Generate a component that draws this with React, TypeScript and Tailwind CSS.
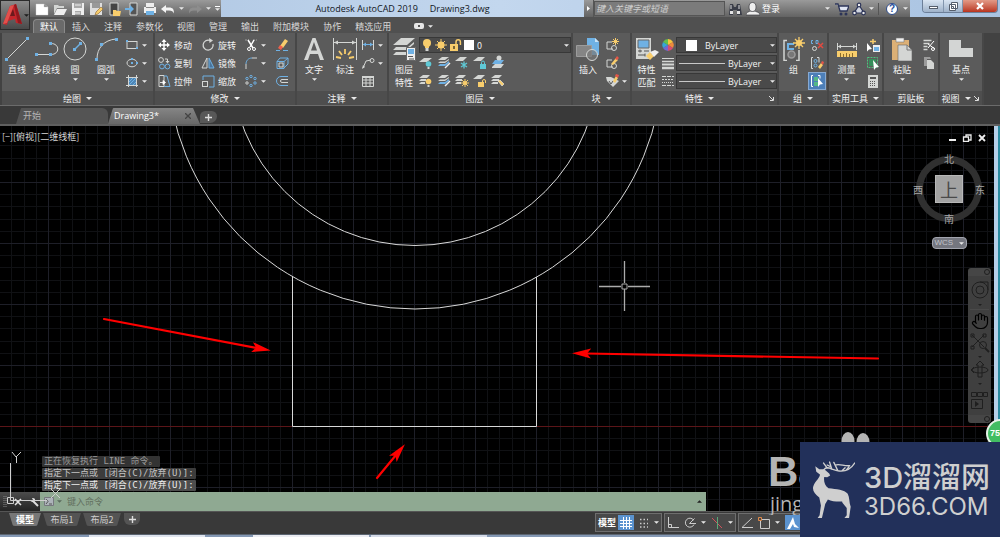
import type { ReactNode } from 'react';
import { Hand } from 'lucide-react';

/* ── Palette shared by the icons ─────────────────────────── */

const L = '#d4d6d4';
const B = '#6fb1e4';
const Y = '#f8cd6c';
const T = '#5fc9d6';
const G = '#9c9c9c';

/* ── Icon drawings ───────────────────────────────────────── */

const ICONS: Record<string, ReactNode> = {
  line: (
    <g>
      <path d="M2 22 22 2" stroke={L} />
      <path d="M0 21h3v3H0zM21 0h3v3h-3z" fill={B} />
    </g>
  ),
  polyline: (
    <g>
      <path d="M2 17.5h14c9 0 9-11 0-11" stroke={L} />
      <path d="M0 16h3v3H0zM14 16h3v3h-3zM14 5h3v3h-3z" fill={B} />
    </g>
  ),
  circle: (
    <g>
      <circle cx="12" cy="12" r="11" stroke={L} />
      <path d="m12 12 5-5" stroke={B} strokeWidth="1.4" />
      <path d="M10 11h3v3h-3zM16 5h3v3h-3z" fill={B} />
    </g>
  ),
  arc: (
    <g>
      <path d="M3 22C3 11 10 3 22 2" stroke={L} />
      <path d="M1 21h3v3H1zM6 6h3v3H6zM21 1h3v3h-3z" fill={B} />
    </g>
  ),
  rect: (
    <g>
      <rect x="2" y="3.5" width="10" height="7" stroke={L} />
      <path d="M1 2h2v2H1zM11 9h2v2h-2z" fill={B} />
    </g>
  ),
  ellipse: (
    <g>
      <ellipse cx="7" cy="7" rx="5" ry="3.8" stroke={L} />
      <path d="M6 6h2v2H6zM11 6h2v2h-2zM6 2h2v2H6z" fill={B} />
    </g>
  ),
  hatch: (
    <g>
      <path d="M1 3.5h12M1 11.5h12M3.5 1v12M11.5 1v12" stroke={L} />
      <path d="M4 4h7v7H4z" fill="#4f86b5" />
      <path d="m4 8 4-4M4 11l7-7M8 11l3-3" stroke={B} />
    </g>
  ),
  move: (
    <g>
      <path d="M7 2v10M2 7h10" stroke="#fff" strokeWidth="1.4" />
      <path d="m7 1 2.5 3h-5zM7 13l2.5-3h-5zM1 7l3-2.5v5zM13 7l-3-2.5v5z" fill="#fff" />
    </g>
  ),
  copy: (
    <g>
      <circle cx="4" cy="4" r="2.4" stroke={L} />
      <path d="M8 3h2.5v2" stroke={L} />
      <path d="m8.5 5 2 2.5 2-2.5z" fill={L} />
      <circle cx="5" cy="10.5" r="2.4" stroke={B} />
      <circle cx="10.5" cy="10.5" r="2.4" stroke={B} />
    </g>
  ),
  stretch: (
    <g>
      <path d="M2 1.5h5v11H2z" stroke={L} />
      <path d="M7 2h3l3 10.5H7" stroke={B} />
      <path d="M3 8.5h4M6 6.5l2.5 2-2.5 2z" stroke="#fff" fill="#fff" strokeWidth=".8" />
    </g>
  ),
  rotate: (
    <g>
      <path d="M9 2.5A5 5 0 1 0 12 6" stroke={L} strokeWidth="1.3" />
      <path d="m8 0 4 2.5L8.5 5z" fill={L} />
    </g>
  ),
  mirror: (
    <g>
      <path d="M6 2v10H1z" stroke={L} />
      <path d="M8 2v10h5z" stroke={B} fill="#4a7399" />
    </g>
  ),
  scale: (
    <g>
      <path d="M2 6V2h11v11H8" stroke={B} />
      <rect x="1.5" y="7.5" width="5" height="5" stroke={L} />
    </g>
  ),
  trim: (
    <g>
      <path d="M1 2h4M9 2h4" stroke={G} strokeDasharray="2 1" />
      <path d="m4 2 5 8M10 2 6 9" stroke="#fff" strokeWidth="1.5" />
      <circle cx="5" cy="11" r="1.5" stroke="#fff" />
      <circle cx="10" cy="11" r="1.5" stroke="#fff" />
    </g>
  ),
  fillet: (
    <g>
      <path d="M2 13V8" stroke={L} />
      <path d="M2 8c0-3 2-6 6-6" stroke={B} />
      <path d="M8 2h5" stroke={L} />
    </g>
  ),
  array: (
    <g stroke={B}>
      <circle cx="7" cy="2.5" r="1.2" />
      <circle cx="11" cy="4.5" r="1.2" />
      <circle cx="11" cy="9" r="1.2" />
      <circle cx="7" cy="11.5" r="1.2" />
      <circle cx="3" cy="9" r="1.2" stroke={L} />
      <circle cx="3" cy="4.5" r="1.2" />
    </g>
  ),
  erase: (
    <g>
      <path d="m5 8 5-7 3 2-5 7z" fill={Y} />
      <path d="m3 10 2-3 3 2-2 3z" fill="#f0604c" />
      <path d="M1 12.5h4M8 12.5h5" stroke={B} />
    </g>
  ),
  explode: (
    <g>
      <path d="M2 5.5h7v7H2zM2 5.5 5 2h8v6l-4 4M9 5.5 13 2" stroke={B} />
      <path d="M4 7h4v4H4z" stroke={L} />
    </g>
  ),
  offset: (
    <g>
      <path d="M13 2.5H6a4.5 4.5 0 0 0 0 9h7" stroke={B} />
      <path d="M13 5.5H7a1.5 1.5 0 0 0 0 3h6" stroke={L} />
    </g>
  ),
  text: <path d="M2 23 10.5 1h3L22 23h-4l-2-6H8l-2 6zM9 13.5h6L12 5z" fill={L} fillRule="evenodd" />,
  dimension: (
    <g>
      <path d="M.5 1v22M23.5 1v22M1 5.5h22" stroke={L} />
      <path d="m1 5.5 4-2v4zM23 5.5l-4-2v4z" fill={L} />
      <path d="M12 12v5M6 14l3 4M18 14l-3 4M3 20l5 1M21 20l-5 1" stroke={Y} strokeWidth="1.8" />
    </g>
  ),
  linear: (
    <g>
      <path d="M1.5 2v10M12.5 2v10" stroke={L} />
      <path d="M2 6.5h10" stroke={B} />
      <path d="m2 6.5 3-2v4zM12 6.5l-3-2v4z" fill={B} />
    </g>
  ),
  leader: (
    <g>
      <path d="m2 12 3-7 5-1" stroke={L} />
      <circle cx="11" cy="4.5" r="2" stroke={L} />
      <path d="m1 13 1-4 2 2z" fill={L} />
    </g>
  ),
  table: (
    <g>
      <path d="M1.5 2.5h11v10h-11zM1.5 6h11M1.5 9h11M5 4v8M9 4v8" stroke={L} />
      <path d="M1 2h12v2H1z" fill={L} />
    </g>
  ),
  layers: (
    <g>
      <path d="m1 8 8-7h14l-8 7zM1 13l3-3h12l6-5v2l-7 6zM1 18l3-3h10v3z" fill={L} />
      <path d="M14.5 10.5h9v13h-9z" fill="#eee" stroke="#666" />
      <path d="M16 12h6v5h-6z" fill={B} />
      <path d="M16 19.5h5M17 22h5" stroke="#555" />
    </g>
  ),
  layerOff: (
    <g>
      <path d="m0 7 5-4h8L8 7z" fill={L} />
      <circle cx="9.5" cy="9" r="2.8" fill={T} />
      <path d="M8.5 12h2v2h-2z" fill={L} />
    </g>
  ),
  layerStack: (
    <g>
      <path d="m1 5 4-3h7L8 5zM1 8l2-1.5h5L12 4v1L8 8z" fill={L} />
      <path d="M1 11l2-2h5l4-3v2l-4 3z" fill={B} />
      <path d="m8 13 5-5" stroke="#eee" strokeWidth="1.5" />
    </g>
  ),
  layerFreeze: (
    <g>
      <path d="m0 6 5-4h7L8 6z" fill={L} />
      <path d="M9 6.5v7M6 8l6 4M12 8l-6 4" stroke={T} strokeWidth="1.3" />
    </g>
  ),
  layerLock: (
    <g>
      <path d="m0 6 5-4h7L8 6z" fill={L} />
      <path d="M7 9h6v5H7z" fill={T} />
      <path d="M8.5 9V7.5a1.5 1.5 0 0 1 3 0V9" stroke={T} />
    </g>
  ),
  layerCurrent: (
    <g>
      <path d="m1 12 3-3h9l-3 4H1z" fill={L} />
      <path d="m1 9 3-4h9l-3 4z" fill={B} />
      <circle cx="8" cy="3" r="2.5" fill={L} />
    </g>
  ),
  layerOn: (
    <g>
      <path d="m0 5 4-3h7L8 5zM0 8l2-2h5v2zM0 11l2-2h4v2z" fill={L} />
      <circle cx="9.5" cy="8.5" r="2.8" fill={Y} />
      <path d="M8.5 12h2v2h-2z" fill={L} />
    </g>
  ),
  layerThaw: (
    <g>
      <path d="m0 5 4-3h7L8 5zM0 8l2-2h5v2zM0 11l2-2h4v2z" fill={L} />
      <path d="M10 6v8M6 10h8M7 7l6 6M13 7l-6 6" stroke={Y} />
      <circle cx="10" cy="10" r="2" fill={Y} />
    </g>
  ),
  layerUnlock: (
    <g>
      <path d="m0 6 5-4h7L8 6z" fill={L} />
      <path d="M5 9h6v5H5z" fill={Y} />
      <path d="M9.5 9V8a1.5 1.5 0 0 1 3 0v2" stroke={Y} />
    </g>
  ),
  layerMatch: (
    <g>
      <path d="m0 5 4-3h7L8 5zM0 8l2-2h6v2zM0 11l2-2h5v2z" fill={L} />
      <path d="m7 8 4 5 2-2-4-4z" fill={Y} stroke="#eee" strokeWidth=".6" />
    </g>
  ),
  insert: (
    <g>
      <path d="M11 1h8l4 4v13H11z" fill={B} />
      <path d="M19 1v4h4" fill="#c8e2f6" />
      <path d="M.5 8.5h15v11H.5z" fill="#858585" stroke={G} />
      <circle cx="16" cy="18" r="5.5" fill="#777" fillOpacity=".7" stroke={L} />
    </g>
  ),
  blockCreate: (
    <g>
      <path d="M7 4H2v7h6" stroke={L} />
      <circle cx="9" cy="10" r="2.5" stroke={L} />
      <path d="M10.5 0v7M7 3.5h7M8 1l5 5M13 1 8 6" stroke={Y} />
    </g>
  ),
  blockEdit: (
    <g>
      <path d="M7 4H2v7h6" stroke={L} />
      <circle cx="9" cy="10" r="2.5" stroke={L} />
      <path d="m6 8 5-6 2 2-5 5z" fill={Y} />
      <path d="m10 3 2-3 2 2-2 2z" fill="#e45548" />
    </g>
  ),
  blockAttr: (
    <g>
      <path d="M1 3h5l8 4-6 6-6-6z" fill={L} />
      <path d="m4 7 2 3 2-3" stroke="#555" />
      <path d="m8 7 3-5 2 2-3 5z" fill={Y} />
      <path d="m10 2 1-2 3 1-1 3z" fill="#e45548" />
    </g>
  ),
  match: (
    <g>
      <path d="M1 1h15v21H1z" fill={L} />
      <path d="M3 3h11v8H3z" fill={B} stroke="#666" />
      <path d="M3 14h4M9 14h5M3 18h7M5 12.5v3M10 16.5v3" stroke="#555" />
      <path d="m11 19 4 4 4-4-4-4z" fill={Y} />
      <path d="m15 15 5-2 4 2-5 5z" fill="#eee" />
    </g>
  ),
  wheel: (
    <g>
      <path d="M7 7V1a6 6 0 0 1 5 3z" fill="#f4c43c" />
      <path d="m7 7 5-3a6 6 0 0 1 0 6z" fill="#ee8a3c" />
      <path d="m7 7 5 3a6 6 0 0 1-5 3z" fill="#d74d72" />
      <path d="M7 7v6a6 6 0 0 1-5-3z" fill="#7468d2" />
      <path d="m7 7-5 3a6 6 0 0 1 0-6z" fill="#35a6d8" />
      <path d="M7 7 2 4a6 6 0 0 1 5-3z" fill="#63bf4f" />
    </g>
  ),
  weight: (
    <g stroke={L}>
      <path d="M1 2.5h12" />
      <path d="M1 5.5h12" strokeWidth="1.5" />
      <path d="M1 8.5h12" strokeWidth="2" />
      <path d="M1 12h12" strokeWidth="2.5" />
    </g>
  ),
  linetype: (
    <g stroke={L}>
      <path d="M1 2.5h12M1 11.5h12" strokeDasharray="4 1" />
      <path d="M1 5.5h12" strokeDasharray="2 1" />
      <path d="M1 8.5h12" strokeDasharray="1 1" />
    </g>
  ),
  group: (
    <g>
      <path d="M5 3.5H2v20h3M14 23.5h3V13" stroke={L} strokeWidth="1.5" />
      <path d="M12 7H6v5h6" stroke={B} strokeWidth="2" />
      <circle cx="9.5" cy="17.5" r="3.5" fill="#777" stroke={G} strokeWidth="1.5" />
      <path d="M17 0v12M11 6h12M13 2l8 8M21 2l-8 8" stroke={Y} strokeWidth="1.3" />
      <circle cx="17" cy="6" r="3" fill={Y} />
    </g>
  ),
  ungroup: (
    <g>
      <path d="M3 2.5H1.5v3H3M6 2.5h2v3H6z" stroke={B} />
      <circle cx="4.5" cy="10.5" r="2" stroke={L} />
      <path d="m8 5 5 5M13 5l-5 5" stroke="#e14a41" strokeWidth="1.5" />
    </g>
  ),
  groupEdit: (
    <g>
      <path d="M3 1.5H1.5v11H3M7 1.5h2v5" stroke={L} />
      <circle cx="5.5" cy="5" r="1.5" stroke={B} />
      <circle cx="5.5" cy="9.5" r="1.5" stroke={B} />
      <path d="m8 11 3-4 2 2-3 4z" fill={Y} />
      <path d="m11 7 1-2 2 1-1 3z" fill="#e45548" />
    </g>
  ),
  groupSelect: (
    <g>
      <path d="M3 1.5H1.5v11H3M8 1.5h2v3" stroke="#fff" />
      <path d="M4 3h4v4H4zM4 8h4v4H4z" fill="#55b886" />
      <path d="m8 4 5 6-3 .4L8 13z" fill="#fff" />
    </g>
  ),
  measure: (
    <g>
      <path d="M2.5 6v7M21.5 6v7M3 9.5h18" stroke={L} />
      <path d="m3 9.5 3-2v4zM21 9.5l-3-2v4z" fill={L} />
      <path d="M2 14h20v6H2z" fill={Y} />
      <path d="M5.5 16v4M8.5 17v3M11.5 16v4M14.5 17v3M17.5 16v4" stroke="#8c6c2c" />
    </g>
  ),
  quickSelect: (
    <g>
      <path d="M7 7h7v7H7z" fill="#eee" />
      <path d="M8 9h5v4H8z" fill={B} />
      <path d="m1 5 5 6-3 .5-2 2z" fill="#fff" />
      <path d="M7 1v5M4 3.5h6" stroke={Y} strokeWidth="1.5" />
    </g>
  ),
  selectAll: (
    <g>
      <rect x="1.5" y="1.5" width="10" height="10" stroke="#4fc47e" strokeDasharray="2 1" />
      <path d="M3 3h7v7H3z" fill="#358d59" />
      <path d="m7 4 6 7-3 .4-2 2.6z" fill="#fff" />
    </g>
  ),
  calculator: (
    <g>
      <path d="M2 1h10v13H2z" fill={L} />
      <path d="M4 3h6v2H4z" fill="#555" />
      <path d="M4 7.5h6M4 9.5h6M4 11.5h6" stroke="#555" strokeDasharray="1 1" />
    </g>
  ),
  paste: (
    <g>
      <path d="M2 3h17v20H2z" fill="#dcb076" />
      <path d="M6 1h8v4H6z" fill="#eee" stroke="#777" strokeWidth=".6" />
      <path d="M8 8h9l5 5v11H8z" fill={L} stroke="#666" strokeWidth=".6" />
      <path d="M17 8v5h5" stroke="#777" />
    </g>
  ),
  cut: (
    <g>
      <path d="M1.5 2.5h8M1.5 5.5h6M1.5 8.5h4M1.5 11.5h4" stroke={L} strokeWidth="1.4" />
      <path d="m12 3-6 7M6 6l7 5" stroke="#fff" />
      <circle cx="11" cy="11" r="1.5" stroke="#fff" />
    </g>
  ),
  copyClip: (
    <g>
      <path d="M2 1h6l1 2H5v7H2z" fill={G} />
      <path d="M5 4h4l3 3v6H5z" fill={L} />
    </g>
  ),
  base: <path d="M0 3h12v8h12v9H0z" fill="#d3d5d4" />,
  bulb: (
    <g>
      <circle cx="7" cy="5" r="4" fill={Y} />
      <path d="M5 8h4v2H5z" fill={Y} />
      <path d="M5.5 10h3v3h-3z" fill={L} />
    </g>
  ),
  sun: (
    <g>
      <circle cx="7" cy="7" r="3.5" fill={Y} />
      <path d="M7 1v12M1 7h12M3 3l8 8M11 3l-8 8" stroke={Y} />
    </g>
  ),
  unlock: (
    <g>
      <path d="M2 6h8v7H2z" fill={Y} />
      <path d="M8 6V4a2.2 2.2 0 0 1 4.4 0v3" stroke={Y} strokeWidth="1.5" />
      <path d="M5 8h2v3H5z" fill="#7a6534" />
    </g>
  ),
  new: <path d="M1 2h8l4 3v8H1zM9 2v3h4" fill="#fff" stroke="#ccc" strokeWidth=".4" />,
  open: (
    <g>
      <path d="M1 3h4l1 1h5v2H4l-3 6z" fill={L} />
      <path d="M4 7h10l-3 6H1z" fill="#eee" />
    </g>
  ),
  save: (
    <g>
      <path d="M1 1h12v12H1z" fill="#eee" />
      <path d="M3 1h8v5H3zM4 9h6v4H4z" fill="#a8a8a8" />
      <path d="M4 3h6M4 11h5" stroke="#eee" />
    </g>
  ),
  saveAs: (
    <g>
      <path d="M1 1h12v12H1z" fill="#ddd" />
      <path d="M3 1h8v5H3z" fill="#999" />
      <path d="m6 13 1-3 5-5 2 2-5 5z" fill={Y} stroke="#84622f" strokeWidth=".6" />
    </g>
  ),
  openMobile: (
    <g>
      <path d="M3 1h8v12H3z" fill="#444" stroke={L} />
      <path d="M6 8h3l1 1h4l-1 5H6z" fill={Y} />
    </g>
  ),
  saveMobile: (
    <g>
      <path d="M5 1h7v12H5z" fill="#555" stroke={L} />
      <path d="M0 6h5V3l4 4-4 4V8H0z" fill={B} />
    </g>
  ),
  print: (
    <g>
      <path d="M3 1h8v4H3zM1 5h12v6H1z" fill="#eee" />
      <path d="M3 9h8v4H3z" fill={B} />
      <path d="M3 5.5h8" stroke="#888" />
    </g>
  ),
  undo: <path d="M0 7 5 3v2.5h3c4 0 5 2 5 6-1-2-2-3-5-3H5V11z" fill="#f4f4f4" />,
  redo: <path d="M14 7 9 3v2.5H6c-4 0-5 2-5 6 1-2 2-3 5-3h3V11z" fill="#8d8d8d" />,
  binoculars: (
    <g>
      <path d="M2 2h3l1 3h2l1-3h3l2 11H9V8H5v5H1z" fill="#3a3d48" />
      <path d="M2 9h3v3H2zM9 9h3v3H9z" fill="#e4e4e4" />
      <path d="M3 3v4M11 3v4" stroke="#ddd" />
    </g>
  ),
  person: (
    <g stroke="#3d3d44" strokeWidth=".7">
      <path d="M0 13c0-3 3-3 4-4h5c1 1 5 1 5 4z" fill="#eee" />
      <ellipse cx="6.5" cy="5" rx="3.5" ry="4.5" fill="#eee" />
    </g>
  ),
  cart: (
    <g>
      <path d="M0 2h3l2 7h7l2-5H4" fill="#dfe5f2" stroke="#2c3458" strokeWidth="1.3" />
      <circle cx="6" cy="12" r="1.5" fill="#2c3458" />
      <circle cx="11" cy="12" r="1.5" fill="#2c3458" />
    </g>
  ),
  a360: (
    <g stroke="#2c3458" strokeWidth="1.2">
      <path d="m7 3 5 8H2z" fill="#d0d5e0" />
      <circle cx="7" cy="3" r="1.8" fill="#eee" />
      <circle cx="2.5" cy="11" r="1.8" fill="#eee" />
      <circle cx="11.5" cy="11" r="1.8" fill="#eee" />
    </g>
  ),
};

function Icon({ name, big }: { name: string; big?: boolean }) {
  const box = big ? 24 : 14;
  return (
    <svg
      className={big ? 'h-6 w-6 shrink-0' : 'h-[14px] w-[14px] shrink-0'}
      viewBox={`0 0 ${box} ${box}`}
      fill="none"
      aria-hidden
    >
      {ICONS[name]}
    </svg>
  );
}

function Caret({ wide }: { wide?: boolean }) {
  return (
    <svg className={wide ? 'h-[3px] w-[6px] shrink-0' : 'h-[3px] w-[5px] shrink-0'} viewBox="0 0 6 3" aria-hidden>
      <path d="M0 0h6L3 3z" fill="#e8e8e8" />
    </svg>
  );
}

/* ── Ribbon building blocks ──────────────────────────────── */

type PanelProps = {
  title: string;
  className: string;
  caret?: boolean;
  launcher?: boolean;
  children: ReactNode;
};

function Panel({ title, className, caret = true, launcher, children }: PanelProps) {
  return (
    <section
      className={`flex shrink-0 flex-col border-r-2 border-[#474747] bg-[#5b5b5b] ${className}`}
    >
      <div className="flex h-[58px] pt-[3px]">{children}</div>
      <div
        className={`relative flex h-[14px] items-center justify-center gap-[5px] bg-[#4e4e4e] ${
          launcher ? 'pr-[10px]' : ''
        }`}
      >
        <span>{title}</span>
        {caret && <Caret wide />}
        {launcher && (
          <svg className="absolute right-[3px] h-[5px] w-[5px]" viewBox="0 0 5 5" aria-hidden>
            <path d="M0 0l4 4M4.5 1v3.5H1" stroke="#ddd" fill="none" />
          </svg>
        )}
      </div>
    </section>
  );
}

type BigProps = { icon: string; label: string[]; className: string; caret?: boolean };

function Big({ icon, label, className, caret }: BigProps) {
  return (
    <button className={`flex shrink-0 flex-col items-center pt-px ${className}`}>
      <Icon name={icon} big />
      <span className="mt-[2px] block">
        {label.map((line) => (
          <span key={line} className="block leading-[13px] whitespace-nowrap">
            {line}
          </span>
        ))}
      </span>
      {caret && (
        <span className="mt-[2px] flex">
          <Caret />
        </span>
      )}
    </button>
  );
}

type SmallItem = { icon: string; name: string; label?: boolean; caret?: boolean; on?: boolean };

function SmallColumn({ items, className = '' }: { items: SmallItem[]; className?: string }) {
  return (
    <div className={`flex shrink-0 flex-col ${className}`}>
      {items.map(({ icon, name, label, caret, on }) => (
        <button
          key={name}
          aria-label={name}
          className={`flex h-[18px] items-center gap-[3px] px-[2px] ${
            on ? 'bg-[#4d7fb8] outline outline-1 -outline-offset-1 outline-[#86a9d2]' : ''
          }`}
        >
          <Icon name={icon} />
          {label && <span className="whitespace-nowrap">{name}</span>}
          {caret && <Caret />}
        </button>
      ))}
    </div>
  );
}

const DRAW: SmallItem[] = [
  { icon: 'rect', name: '矩形', caret: true },
  { icon: 'ellipse', name: '椭圆', caret: true },
  { icon: 'hatch', name: '图案填充', caret: true },
];

const MODIFY: SmallItem[][] = [
  [
    { icon: 'move', name: '移动', label: true },
    { icon: 'copy', name: '复制', label: true },
    { icon: 'stretch', name: '拉伸', label: true },
  ],
  [
    { icon: 'rotate', name: '旋转', label: true },
    { icon: 'mirror', name: '镜像', label: true },
    { icon: 'scale', name: '缩放', label: true },
  ],
  [
    { icon: 'trim', name: '修剪', caret: true },
    { icon: 'fillet', name: '圆角', caret: true },
    { icon: 'array', name: '阵列', caret: true },
  ],
  [
    { icon: 'erase', name: '删除' },
    { icon: 'explode', name: '分解' },
    { icon: 'offset', name: '偏移' },
  ],
];

const LAYER_TOOLS = [
  ['layerOff', 'layerStack', 'layerFreeze', 'layerLock', 'layerCurrent'],
  ['layerOn', 'layerStack', 'layerThaw', 'layerUnlock', 'layerMatch'],
];

const PROPS = [
  { icon: 'wheel', name: '颜色' },
  { icon: 'weight', name: '线宽' },
  { icon: 'linetype', name: '线型' },
];

function Ribbon() {
  return (
    <div className="flex h-[73px] border-b border-[#6b6b6b] bg-[#424242] pl-[2px] text-[9px] leading-[13px] text-[#f2f2f2]">
      <Panel title="绘图" className="w-[153px]">
        <Big icon="line" label={['直线']} className="w-[30px]" />
        <Big icon="polyline" label={['多段线']} className="w-[29px]" />
        <Big icon="circle" label={['圆']} className="w-[28px]" caret />
        <Big icon="arc" label={['圆弧']} className="w-[34px]" caret />
        <SmallColumn items={DRAW} />
      </Panel>
      <Panel title="修改" className="w-[142px]">
        <SmallColumn items={MODIFY[0]} className="w-[44px]" />
        <SmallColumn items={MODIFY[1]} className="w-[43px]" />
        <SmallColumn items={MODIFY[2]} className="w-[31px]" />
        <SmallColumn items={MODIFY[3]} />
      </Panel>
      <Panel title="注释" className="w-[92px]">
        <Big icon="text" label={['文字']} className="w-[34px]" caret />
        <Big icon="dimension" label={['标注']} className="w-[28px]" />
        <SmallColumn
          items={[
            { icon: 'linear', name: '线性', caret: true },
            { icon: 'leader', name: '引线', caret: true },
            { icon: 'table', name: '表格' },
          ]}
        />
      </Panel>
      <Panel title="图层" className="w-[184px]">
        <Big icon="layers" label={['图层', '特性']} className="w-[30px]" />
        <div className="flex flex-1 flex-col">
          <div className="mt-px flex h-4 items-center border border-[#383838] bg-[#4a4a4a] pr-px">
            <Icon name="bulb" />
            <Icon name="sun" />
            <Icon name="unlock" />
            <span className="ml-[2px] h-[10px] w-[10px] bg-white" />
            <select
              aria-label="图层"
              className="h-full flex-1 appearance-none bg-transparent pl-[3px] text-[9px]"
            >
              <option>0</option>
            </select>
            <Caret />
          </div>
          {LAYER_TOOLS.map((row, r) => (
            <div key={r} className="flex h-[18px] items-center gap-1">
              {row.map((icon, i) => (
                <button key={i} aria-label={`图层工具 ${r + 1}-${i + 1}`}>
                  <Icon name={icon} />
                </button>
              ))}
            </div>
          ))}
        </div>
      </Panel>
      <Panel title="块" className="w-[59px]">
        <Big icon="insert" label={['插入']} className="w-[30px]" />
        <SmallColumn
          items={[
            { icon: 'blockCreate', name: '创建' },
            { icon: 'blockEdit', name: '编辑' },
            { icon: 'blockAttr', name: '编辑属性', caret: true },
          ]}
        />
      </Panel>
      <Panel title="特性" className="w-[147px]" launcher>
        <Big icon="match" label={['特性', '匹配']} className="w-[29px]" />
        <div className="flex flex-1 flex-col gap-[2px] pt-px">
          {PROPS.map(({ icon, name }, i) => (
            <div key={name} className="flex h-4 items-center gap-px">
              <Icon name={icon} />
              <div className="flex h-full flex-1 items-center border border-[#383838] bg-[#4a4a4a] px-px">
                {i === 0 ? (
                  <span className="mr-[5px] ml-2 h-[11px] w-[11px] bg-white" />
                ) : (
                  <span className="ml-px h-px w-[46px] bg-[#c8c8c8]" />
                )}
                <select
                  aria-label={name}
                  className="h-full min-w-0 flex-1 appearance-none bg-transparent pl-[3px] font-['Open_Sans','Noto_Sans_CJK_SC',sans-serif] text-[9px]"
                >
                  <option>ByLayer</option>
                </select>
                <Caret />
              </div>
            </div>
          ))}
        </div>
      </Panel>
      <Panel title="组" className="w-[50px]">
        <Big icon="group" label={['组']} className="w-[29px]" />
        <SmallColumn
          items={[
            { icon: 'ungroup', name: '解除编组' },
            { icon: 'groupEdit', name: '组编辑' },
            { icon: 'groupSelect', name: '启用组选择', on: true },
          ]}
        />
      </Panel>
      <Panel title="实用工具" className="w-[55px]">
        <Big icon="measure" label={['测量']} className="w-[35px]" caret />
        <SmallColumn
          items={[
            { icon: 'quickSelect', name: '快速选择' },
            { icon: 'selectAll', name: '全部选择' },
            { icon: 'calculator', name: '快速计算器' },
          ]}
        />
      </Panel>
      <Panel title="剪贴板" className="w-[56px]" caret={false}>
        <Big icon="paste" label={['粘贴']} className="w-[36px]" caret />
        <SmallColumn
          items={[
            { icon: 'cut', name: '剪切' },
            { icon: 'copyClip', name: '复制剪裁' },
          ]}
        />
      </Panel>
      <Panel title="视图" className="w-[44px]" launcher>
        <Big icon="base" label={['基点']} className="w-[42px]" caret />
      </Panel>
    </div>
  );
}

/* ── Title bar and tabs ──────────────────────────────────── */

const QUICK = [
  ['new', '新建'],
  ['open', '打开'],
  ['save', '保存'],
  ['saveAs', '另存为'],
  ['openMobile', '从移动设备打开'],
  ['saveMobile', '保存到移动设备'],
  ['print', '打印'],
  ['undo', '放弃'],
];

const GREY_BAR = 'bg-gradient-to-b from-[#9a9a9a] to-[#636363]';
const WINDOW_BUTTON = 'border-r border-[#8295ad] bg-gradient-to-b from-[#d9e5f2] to-[#9fb2c9]';

function TitleBar() {
  return (
    <header className="flex h-[17px] bg-gradient-to-r from-[#a9c2df] via-[#c3d7ee] to-[#a9c3e1]">
      <div className={`flex w-[221px] shrink-0 items-center gap-1 pl-[35px] ${GREY_BAR}`}>
        {QUICK.map(([icon, name]) => (
          <button key={icon} aria-label={name}>
            <Icon name={icon} />
          </button>
        ))}
        <Caret />
        <button aria-label="重做">
          <Icon name="redo" />
        </button>
        <Caret />
        <button aria-label="自定义快速访问工具栏" className="border-t border-white pt-px">
          <Caret />
        </button>
      </div>
      <h1 className="flex flex-1 items-center justify-center gap-3 overflow-hidden font-['Open_Sans',sans-serif] text-[9px] font-medium whitespace-nowrap text-[#12161c]">
        <span>Autodesk AutoCAD 2019</span>
        <span>Drawing3.dwg</span>
      </h1>
      <div className={`flex w-[326px] shrink-0 items-center text-[9px] text-white ${GREY_BAR}`}>
        <button aria-label="展开搜索" className="flex h-full w-[10px] items-center justify-center border-r border-[#555]">
          <svg className="h-[5px] w-[3px]" viewBox="0 0 3 5" aria-hidden>
            <path d="M0 0v5l3-2.5z" fill="#fff" />
          </svg>
        </button>
        <input
          aria-label="搜索"
          placeholder="键入关键字或短语"
          className="h-[15px] w-[131px] border border-[#555] bg-[#7b7b7b] pl-px text-[9px] italic placeholder:text-[#d0d0d0]"
        />
        <button aria-label="查找" className="ml-[3px]">
          <Icon name="binoculars" />
        </button>
        <button className="ml-1 flex items-center gap-[2px] pr-[45px]">
          <Icon name="person" />
          <span>登录</span>
        </button>
        <Caret />
        <button aria-label="应用商店" className="ml-[5px]">
          <Icon name="cart" />
        </button>
        <button aria-label="保持连接" className="mx-[3px]">
          <Icon name="a360" />
        </button>
        <Caret />
        <span className="mx-1 h-3 w-px bg-[#555]" />
        <button
          aria-label="帮助"
          className="mr-[5px] ml-[3px] flex h-3 w-3 items-center justify-center rounded-full border border-[#2c4a8a] bg-white font-['Liberation_Sans',sans-serif] text-[10px] font-bold text-[#27509c]"
        >
          ?
        </button>
        <Caret />
      </div>
      <div className="flex w-[90px] shrink-0 justify-end pr-[2px]">
        <div className="flex h-[13px] overflow-hidden rounded-b border border-t-0 border-[#6c7f99]">
          <button aria-label="最小化" className={`flex w-[21px] items-end justify-center pb-[3px] ${WINDOW_BUTTON}`}>
            <span className="h-[3px] w-[9px] border border-[#555e6c] bg-white" />
          </button>
          <button aria-label="还原" className={`flex w-[19px] items-center justify-center ${WINDOW_BUTTON}`}>
            <svg className="h-[9px] w-[9px]" viewBox="0 0 9 9" fill="#fff" stroke="#555e6c" aria-hidden>
              <path d="M2.5.5h6v6h-6zM.5 2.5h6v6h-6z" />
              <path d="M2.5 4.5h2v2h-2z" />
            </svg>
          </button>
          <button aria-label="关闭" className="flex w-[34px] items-center justify-center bg-gradient-to-b from-[#e29a87] to-[#b8331f]">
            <svg className="h-2 w-2" viewBox="0 0 8 8" aria-hidden>
              <path d="m1 1 6 6M7 1 1 7" stroke="#fff" strokeWidth="2.2" />
            </svg>
          </button>
        </div>
      </div>
    </header>
  );
}

const RIBBON_TABS = ['默认', '插入', '注释', '参数化', '视图', '管理', '输出', '附加模块', '协作', '精选应用'];

function RibbonTabs() {
  return (
    <nav className="flex h-4 items-stretch bg-[#505050] pl-[33px] text-[9px] leading-[13px] text-[#d8d8d8]">
      {RIBBON_TABS.map((tab, i) => (
        <a
          key={tab}
          href="#"
          className={`flex items-center ${
            i === 0
              ? 'mt-[2px] rounded-t-sm border border-b-0 border-[#8a8a8a] bg-[#6a6a6a] px-[6px] text-white'
              : 'px-[7px] pt-[2px]'
          }`}
        >
          {tab}
        </a>
      ))}
      <button aria-label="最小化功能区" className="ml-4 flex items-center gap-1 pt-[2px]">
        <span className="flex h-[6px] w-[10px] items-center justify-center rounded-[2px] bg-[#e6e6e6]">
          <span className="h-[2px] w-[2px] bg-[#555]" />
        </span>
        <Caret />
      </button>
    </nav>
  );
}

function FileTabs() {
  return (
    <nav className="flex h-5 items-end border-b-2 border-[#5f5f5f] bg-[#393939] pl-4 font-['Open_Sans','Noto_Sans_CJK_SC',sans-serif] text-[9px]">
      <a
        href="#"
        className="flex h-4 w-[92px] items-center rounded-t-md bg-[#545454] pl-[7px] text-[#b4b4b4] [clip-path:polygon(5px_0,100%_0,100%_100%,0_100%)]"
      >
        开始
      </a>
      <a
        href="#"
        className="flex h-4 w-[92px] items-center justify-between rounded-t-md bg-gradient-to-b from-[#858585] to-[#686868] pr-[9px] pl-[6px] text-white [clip-path:polygon(5px_0,85px_0,100%_100%,0_100%)]"
      >
        Drawing3*
        <svg className="h-[6px] w-[6px]" viewBox="0 0 6 6" aria-hidden>
          <path d="m0 0 6 6M6 0 0 6" stroke="#444" strokeWidth="1.3" />
        </svg>
      </a>
      <button
        aria-label="新图形"
        className="mb-px flex h-3 w-[17px] items-center justify-center rounded-t-md rounded-br-lg bg-[#585858]"
      >
        <svg className="h-[7px] w-[7px]" viewBox="0 0 7 7" aria-hidden>
          <path d="M3.5 0v7M0 3.5h7" stroke="#ddd" strokeWidth="1.4" />
        </svg>
      </button>
    </nav>
  );
}

/* ── Drawing area ────────────────────────────────────────── */

function Drawing() {
  return (
    <svg className="absolute inset-0 h-full w-full" fill="none" aria-hidden>
      <defs>
        <pattern id="grid" x="48" y="56" width="61" height="61" patternUnits="userSpaceOnUse">
          <path
            d="M12.5 0v61M24.5 0v61M37.5 0v61M49.5 0v61M0 12.5h61M0 24.5h61M0 37.5h61M0 49.5h61"
            stroke="#101114"
          />
          <path d="M.5 0v61M0 .5h61" stroke="#1e1f28" />
        </pattern>
        <marker id="head" markerWidth="20" markerHeight="12" refX="5" refY="6" orient="auto" markerUnits="userSpaceOnUse">
          <path d="M0 1 19 6 0 11 4 6z" fill="#f00" />
        </marker>
      </defs>
      <rect width="100%" height="100%" fill="url(#grid)" />
      <path d="M0 300.5h292M537 300.5h463" stroke="#5c1518" />
      <g stroke="#d8d8d8">
        <circle cx="415" cy="-64.500" r="184" />
        <circle cx="415" cy="-64.500" r="247.500" />
        <path d="M292.5 150v150.5h244V151" />
      </g>
      <g stroke="#f00" strokeWidth="2.2" strokeLinecap="round">
        <path d="m104 193 153 29" markerEnd="url(#head)" />
        <path d="m878 232.5-292-5" markerEnd="url(#head)" />
        <path d="m377 352 19-23" markerEnd="url(#head)" />
      </g>
      <g stroke="#ababab">
        <path d="M624.5 135v22M624.5 163v22M599 160.5h22M628 160.5h22" strokeWidth="1.3" />
        <path d="M622 158h5v5h-5z" />
      </g>
    </svg>
  );
}

function UcsIcon() {
  return (
    <svg className="absolute bottom-0 left-0 h-[62px] w-16" viewBox="0 0 64 62" fill="none" stroke="#cfcfcf" aria-hidden>
      <path d="M10.5 14v37.5H47M7.5 48.5h6v6h-6zM12 3l4 5 5-5M16.5 8v6M51 40l9 9M60 40l-9 9" />
    </svg>
  );
}

function ViewCube() {
  return (
    <div className="absolute top-[26px] right-[9px] flex w-[72px] flex-col items-center text-[10px] text-[#a6a6a6]">
      <div className="relative flex h-[74px] w-[72px] items-center justify-center">
        <div className="h-[66px] w-[66px] rounded-full border-[7px] border-[#303030]" />
        <span className="absolute top-0 leading-[14px]">北</span>
        <span className="absolute bottom-0 leading-[14px]">南</span>
        <span className="absolute left-0">西</span>
        <span className="absolute right-0">东</span>
        <button className="absolute flex h-7 w-7 items-center justify-center bg-[#a2a2a2] text-[18px] text-[#4a4a4a] outline outline-1 -outline-offset-1 outline-[#b8b8b8]">
          上
        </button>
      </div>
      <button className="mt-[11px] flex h-3 w-[35px] items-center justify-between rounded border border-[#a2a4ae] bg-[#74767f] px-[2px] font-['Liberation_Sans',sans-serif] text-[8px] text-[#c2c3ca]">
        WCS
        <Caret />
      </button>
    </div>
  );
}

function NavBar() {
  return (
    <div className="absolute top-[142px] right-[3px] rounded-[3px] bg-[#464646]">
      <svg className="h-[155px] w-[23px]" viewBox="0 0 23 155" fill="none" stroke="#1f1f1f" aria-hidden>
        <rect x="0" y="8" width="23" height="139" fill="#3f3f3f" stroke="none" />
        <circle cx="19" cy="4" r="2.5" />
        <circle cx="19" cy="151" r="2.5" />
        <circle cx="12" cy="22" r="8" />
        <circle cx="12" cy="22" r="4" />
        <path d="M12 14h8v8" />
        <Hand x={3} y={44} width={18} height={18} strokeWidth={1.6} />
        <path d="m4 67 12 12M16 67 4 79M3 66h3v3H3zM15 66h3v3h-3zM3 78h3v3H3z" />
        <circle cx="15" cy="77" r="3.5" />
        <path d="m17 80 4 4" strokeWidth="2" />
        <ellipse cx="12" cy="102" rx="8" ry="3" />
        <path d="M10 109V97H8l4-4 4 4h-2v12zM6 99l-3 3 3 3" />
        <path d="M3.5 124.5h5v4h-5zM9.5 124.5h5v4h-5zM15.5 124.5h4v4h-4zM3.5 131.5h11v9h-11z" />
        <path d="m7 133 4 3-4 3zM10 36h4l-2 2zM10 88h4l-2 2zM10 115h4l-2 2z" fill="#1f1f1f" stroke="none" />
        <path d="M2 41.5h19" stroke="#4a4a4a" />
      </svg>
    </div>
  );
}

const HISTORY = [
  { text: '正在恢复执行 LINE 命令。', className: 'bg-[#333] text-[#989898]' },
  { text: '指定下一点或 [闭合(C)/放弃(U)]:', className: 'bg-[#3c3c3c] text-[#c4c4c4]' },
  { text: '指定下一点或 [闭合(C)/放弃(U)]:', className: 'bg-[#4d4d4d] text-[#ececec]' },
];

function CommandLine() {
  return (
    <div className="absolute bottom-0 left-0 w-[71%]">
      <div className="flex flex-col items-start gap-px pb-px pl-[42px] font-['DejaVu_Sans_Mono','Noto_Sans_CJK_SC',monospace] text-[9px] leading-[11px]">
        {HISTORY.map(({ text, className }, i) => (
          <p key={i} className={`h-[11px] rounded-[1px] px-[2px] whitespace-nowrap ${className}`}>
            {text}
          </p>
        ))}
      </div>
      <div className="flex h-[19px] items-center bg-[#8fa992]">
        <div className="flex h-full w-10 shrink-0 items-center gap-[7px] bg-gradient-to-b from-[#4c4c4c] to-[#242424] pl-[3px]">
          <svg className="h-3 w-1" viewBox="0 0 4 12" aria-hidden>
            <path d="M1 0v12M3 0v12" stroke="#888" strokeDasharray="1 1" />
          </svg>
          <button aria-label="关闭命令行">
            <svg className="h-2 w-2" viewBox="0 0 8 8" aria-hidden>
              <path d="m1 1 6 6M7 1 1 7" stroke="#e4e4e4" strokeWidth="1.5" />
            </svg>
          </button>
          <button aria-label="自定义">
            <svg className="h-[10px] w-[10px]" viewBox="0 0 10 10" aria-hidden>
              <path d="m4 4 5 5" stroke="#ddd" strokeWidth="2" />
              <path d="M1 3a3 3 0 0 0 5 1V2a3 3 0 0 0-3-1l1 2-1 1z" fill="#ddd" />
            </svg>
          </button>
        </div>
        <svg className="ml-1 h-[9px] w-[10px] shrink-0" viewBox="0 0 10 9" fill="none" aria-hidden>
          <path d="M.5.5h9v8h-9z" fill="#adb3ba" stroke="#76787e" />
          <path d="m2 2 2 2.5L2 7M5 7h3" stroke="#555" />
        </svg>
        <svg className="ml-[3px] h-[3px] w-[5px] shrink-0" viewBox="0 0 6 3" aria-hidden>
          <path d="M0 0h6L3 3z" fill="#5a6a5c" />
        </svg>
        <input
          aria-label="命令"
          placeholder="键入命令"
          className="h-full min-w-0 flex-1 bg-transparent pl-[5px] text-[9px] placeholder:text-[#62705f]"
        />
        <svg className="mr-1 h-[3px] w-[5px]" viewBox="0 0 6 3" aria-hidden>
          <path d="M0 3h6L3 0z" fill="#222" />
        </svg>
      </div>
    </div>
  );
}

function Viewport() {
  return (
    <main className="relative flex-1 overflow-hidden bg-black">
      <Drawing />
      <div className="absolute top-1 left-[2px] text-[9px] leading-[13px] text-[#d6d6d6]">[−][俯视][二维线框]</div>
      <svg className="absolute top-2 right-2 h-2 w-[37px]" viewBox="0 0 37 8" fill="none" stroke="#eee" aria-hidden>
        <path d="M0 6h7" strokeWidth="2" />
        <path d="M17 2.5V1h5v5h-2M14.5 3h5v4.5h-5z" strokeWidth="1.3" />
        <path d="m30 1 6 6M36 1l-6 6" strokeWidth="1.8" />
      </svg>
      <ViewCube />
      <NavBar />
      <CommandLine />
      <UcsIcon />
    </main>
  );
}

/* ── Status bar ──────────────────────────────────────────── */

const STATUS_GROUP = 'flex h-[19px] items-center gap-[5px] border border-[#6e6e6e] bg-[#484848] px-[2px]';

function StatusBar() {
  return (
    <footer className="flex h-[23px] items-start border-t border-[#555] bg-[#393939] text-[9px] leading-[13px] text-[#cfcfcf]">
      <div className="flex gap-[2px] pl-[9px]">
        {['模型', '布局1', '布局2'].map((tab, i) => (
          <button
            key={tab}
            className={`mt-px h-[13px] rounded-b-md [clip-path:polygon(0_0,100%_0,calc(100%_-_4px)_100%,4px_100%)] ${
              i === 0 ? 'w-8 bg-[#777] font-bold text-white' : 'w-[38px] bg-[#545454]'
            }`}
          >
            {tab}
          </button>
        ))}
        <button
          aria-label="新布局"
          className="mt-px ml-px flex h-3 w-4 items-center justify-center rounded-b-md bg-[#545454]"
        >
          <svg className="h-[7px] w-[7px]" viewBox="0 0 7 7" aria-hidden>
            <path d="M3.5 0v7M0 3.5h7" stroke="#ddd" strokeWidth="1.4" />
          </svg>
        </button>
      </div>
      <div className="ml-auto flex w-[405px] gap-[2px] pt-px">
        <div className={STATUS_GROUP}>
          <button className="font-bold text-white">模型</button>
          <button aria-label="栅格" className="-ml-[3px] flex h-[15px] w-4 items-center justify-center bg-[#5b93cf]">
            <svg className="h-3 w-3" viewBox="0 0 12 12" aria-hidden>
              <path d="M3.5 0v12M6.5 0v12M9.5 0v12M0 3.5h12M0 6.5h12M0 9.5h12" stroke="#fff" />
            </svg>
          </button>
          <button aria-label="捕捉">
            <svg className="h-[10px] w-[10px]" viewBox="0 0 10 10" aria-hidden>
              <path d="M1 1.5h8M1 5.5h8M1 9h8" stroke="#ccc" strokeWidth="1.5" strokeDasharray="1.5 2" />
            </svg>
          </button>
          <Caret />
        </div>
        <div className={STATUS_GROUP}>
          <button aria-label="正交">
            <svg className="h-3 w-3" viewBox="0 0 12 12" fill="none" stroke="#ccc" aria-hidden>
              <path d="M1.5 0v10.5H12M1.5 7.5h3v3" />
            </svg>
          </button>
          <button aria-label="极轴">
            <svg className="h-3 w-3" viewBox="0 0 12 12" fill="none" stroke="#ccc" aria-hidden>
              <path d="M9.5 3A4.5 4.5 0 1 0 10 7.500M5.5 6.5H12M5.5 6.5l5-5" />
            </svg>
          </button>
          <Caret />
          <button aria-label="等轴测">
            <svg className="h-3 w-3" viewBox="0 0 12 12" fill="none" aria-hidden>
              <path d="m1 1 10 10" stroke="#d0525a" />
              <path d="M6.5 0v12" stroke="#5aa877" />
            </svg>
          </button>
          <Caret />
        </div>
        <div className={`${STATUS_GROUP} flex-1`}>
          <button aria-label="对象捕捉追踪">
            <svg className="h-3 w-3" viewBox="0 0 12 12" fill="none" stroke="#ccc" aria-hidden>
              <path d="M11 1 1 10.5h11" />
            </svg>
          </button>
          <button aria-label="对象捕捉">
            <svg className="h-3 w-3" viewBox="0 0 12 12" fill="none" aria-hidden>
              <path d="M2.5 2.5h9v9h-9z" stroke="#ccc" />
              <path d="M.5.5h3v3h-3z" fill="#484848" stroke="#e08a4a" />
            </svg>
          </button>
          <Caret />
          <button aria-label="注释比例" className="flex h-[15px] w-4 items-center justify-center bg-[#5b93cf]">
            <svg className="h-3 w-3" viewBox="0 0 12 12" aria-hidden>
              <path d="M6 0 8 7l4 4-5-1-1-3-3 5H0z" fill="#fff" />
            </svg>
          </button>
        </div>
      </div>
    </footer>
  );
}

function TaskbarEdge() {
  return (
    <div className="flex h-[3px] gap-[2px] border-t border-[#5b6470] bg-[#8498b4]">
      <span className="w-[87px]" />
      <span className="w-[116px] bg-[#dfe4ee]" />
      <span className="w-[44px]" />
      <span className="w-[116px] bg-[#ebecf2]" />
      <span className="w-[116px] bg-[#d5dbe8]" />
    </div>
  );
}

/* ── Overlays ────────────────────────────────────────────── */

function Watermark() {
  return (
    <>
      <svg className="absolute right-[122px] bottom-[86px] h-5 w-10" viewBox="0 0 40 20" aria-hidden>
        <ellipse cx="10" cy="10" rx="6.5" ry="9" fill="#b4b4b4" />
        <ellipse cx="25" cy="11" rx="6.5" ry="9" fill="#b4b4b4" />
      </svg>
      <div className="absolute right-[200px] bottom-[22px] w-8 overflow-hidden font-['Liberation_Sans',sans-serif] text-[#b4b4b4]">
        <div className="text-[42px] leading-[42px] font-bold">Ba</div>
        <div className="pl-[2px] font-['Open_Sans',sans-serif] text-[20px] leading-[22px]">jing</div>
      </div>
    </>
  );
}

function Brand() {
  return (
    <div className="absolute right-0 bottom-0 flex h-[95px] w-[200px] items-center gap-[9px] bg-[#22305a] pl-[12px] text-[#cfcfcf]">
      <svg className="h-[59px] w-[43px] shrink-0" viewBox="0 0 130 176" fill="none" aria-hidden>
        <path
          d="M10 18 22 27 37 27 52 40 55 46 46 51 37 50C35 62 38 76 50 84 74 87 98 88 108 101 114 112 112 128 117 140L112 174H98L105 166V144L92 128 91 124C78 125 60 124 48 118L40 132 30 174H17L23 166 27 136 22 112C8 102 0 90 4 78 10 62 24 54 24 43L13 34z"
          fill="#cfcfcf"
        />
        <path
          d="M36 28C46 14 60 30 82 32 102 34 118 26 129 8M60 27 53 5M46 23 35 8M78 31 66 6M90 32l10-10M104 29l8-10M46 14l10 5M70 14C86 10 96 18 114 16"
          stroke="#cfcfcf"
          strokeWidth="4"
          strokeLinecap="round"
        />
      </svg>
      <div className="whitespace-nowrap">
        <div className="font-['Inter','Noto_Sans_CJK_SC',sans-serif] text-[29px] leading-[34px] font-medium">3D溜溜网</div>
        <div className="font-['Inter',sans-serif] text-[24px] leading-[24px]">3D66.COM</div>
      </div>
    </div>
  );
}

function AppButton() {
  return (
    <button
      aria-label="应用程序菜单"
      className="absolute top-0 left-0 flex h-[30px] w-[30px] items-center gap-px border border-[#2b2b2b] bg-gradient-to-b from-[#8a8a8a] to-[#4a4a4a] pl-[2px]"
    >
      <svg className="h-[22px] w-5" viewBox="0 0 20 22" aria-hidden>
        <path d="M0 20 7 2l6-2 6 20-6-1-1-4-7 2-1 4z" fill="#c4262c" />
        <path d="m7 12 3-7 2 7z" fill="#6b1a1d" />
        <path d="M0 20 7 2l4-1-7 18z" fill="#e2504c" />
        <path d="m11 1 2-1 6 20-4-1z" fill="#92181e" />
      </svg>
      <svg className="h-[3px] w-[5px]" viewBox="0 0 6 3" aria-hidden>
        <path d="M0 0h6L3 3z" fill="#1c1c1c" />
      </svg>
    </button>
  );
}

export default function App() {
  return (
    <div className="relative flex min-h-screen flex-col overflow-hidden bg-[#393939] font-['Noto_Sans_CJK_SC',sans-serif]">
      <TitleBar />
      <RibbonTabs />
      <Ribbon />
      <FileTabs />
      <div className="flex flex-1">
        <Viewport />
        <div className="w-[6px] border-r-2 border-[#2a8aa0] bg-[#b5cfe9]" />
      </div>
      <StatusBar />
      <TaskbarEdge />
      <AppButton />
      <Watermark />
      <div className="absolute right-[-15px] bottom-[89px] h-[29px] w-[29px] rounded-full border-2 border-[#e4f2e6] bg-[#42bd62] pl-[2px] font-['Liberation_Sans',sans-serif] text-[9px] leading-[25px] font-bold text-white">
        75
      </div>
      <Brand />
    </div>
  );
}
